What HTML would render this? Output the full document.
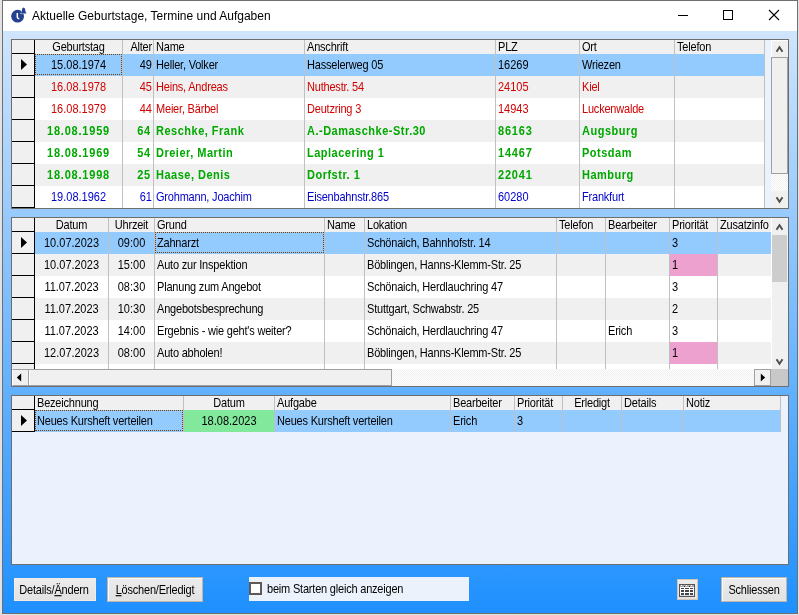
<!DOCTYPE html>
<html><head><meta charset="utf-8"><style>
html,body{margin:0;padding:0;}
body{will-change:transform;width:799px;height:615px;overflow:hidden;position:relative;background:#e2e2e2;font-family:"Liberation Sans", sans-serif;}
div{box-sizing:border-box;}
.gb{position:absolute;border:1px solid #6e6e6e;}
.rh{position:absolute;background:#f0f0f0;}
.t{position:absolute;transform:scaleY(1.12);font-size:11px;white-space:nowrap;overflow:hidden;padding:0 2px;color:#000;letter-spacing:-0.2px}
.btn{position:absolute;background:linear-gradient(#ececec,#e2e2e2);border:1px solid #c5b5a5;font-size:11px;text-align:center;color:#000;letter-spacing:-0.2px}
</style></head><body>
<div style="position:absolute;left:2px;top:0;width:796px;height:614px;border:1px solid #6f6f6f;background:#fff"></div>
<div style="position:absolute;left:3px;top:31px;width:794px;height:582px;background:linear-gradient(#cfe5fc,#1e90ff)"></div>

<div style="position:absolute;left:32px;top:8px;font-size:12px;line-height:16px;color:#000;white-space:nowrap">Aktuelle Geburtstage, Termine und Aufgaben</div>
<svg style="position:absolute;left:10px;top:6px" width="18" height="18"><circle cx="7.6" cy="10.2" r="6.4" fill="#26418f"/><path d="M7.3 7L7.3 11.2Q7.5 12.6 9.3 12.8" stroke="#fff" stroke-width="1.5" fill="none"/><path d="M10.6 7.6L16.6 7.6Q15.4 6.6 15.3 4.2Q15.1 1.6 13.6 1.6Q12.1 1.6 11.9 4.2Q11.8 6.6 10.6 7.6Z" fill="#26418f" stroke="#fff" stroke-width="0.8" paint-order="stroke"/></svg>
<div style="position:absolute;left:678px;top:15px;width:10px;height:1px;background:#000"></div>
<div style="position:absolute;left:723px;top:10px;width:10px;height:10px;border:1px solid #000"></div>
<svg style="position:absolute;left:768px;top:9px" width="12" height="12"><path d="M1 1L11 11M11 1L1 11" stroke="#000" stroke-width="1.1"/></svg>
<div class="gb" style="left:11px;top:39px;width:778px;height:170px"></div>
<div style="position:absolute;left:12px;top:40px;width:776px;height:168px;background:#ebf2fe"></div>
<div style="position:absolute;left:35px;top:40px;width:730px;height:14px;background:#f0f0f0"></div>
<div style="position:absolute;left:12px;top:40px;width:23px;height:168px;background:#000"></div>
<div class="rh" style="left:12px;top:40px;width:22px;height:13px"></div>
<div style="position:absolute;left:35px;top:54px;width:730px;height:22px;background:#94cbff"></div>
<div class="rh" style="left:12px;top:54px;width:22px;height:21px"></div>
<svg style="position:absolute;left:19px;top:57px" width="10" height="15"><path d="M2 2L2 13L8 7.5Z" fill="#000"/></svg>
<div style="position:absolute;left:35px;top:76px;width:730px;height:22px;background:#f0f0f0"></div>
<div class="rh" style="left:12px;top:76px;width:22px;height:21px"></div>
<div style="position:absolute;left:35px;top:98px;width:730px;height:22px;background:#ffffff"></div>
<div class="rh" style="left:12px;top:98px;width:22px;height:21px"></div>
<div style="position:absolute;left:35px;top:120px;width:730px;height:22px;background:#f0f0f0"></div>
<div class="rh" style="left:12px;top:120px;width:22px;height:21px"></div>
<div style="position:absolute;left:35px;top:142px;width:730px;height:22px;background:#ffffff"></div>
<div class="rh" style="left:12px;top:142px;width:22px;height:21px"></div>
<div style="position:absolute;left:35px;top:164px;width:730px;height:22px;background:#f0f0f0"></div>
<div class="rh" style="left:12px;top:164px;width:22px;height:21px"></div>
<div style="position:absolute;left:35px;top:186px;width:730px;height:22px;background:#ffffff"></div>
<div class="rh" style="left:12px;top:186px;width:22px;height:21px"></div>
<div style="position:absolute;left:122px;top:40px;width:1px;height:168px;background:#c0c0c0"></div>
<div style="position:absolute;left:153px;top:40px;width:1px;height:168px;background:#c0c0c0"></div>
<div style="position:absolute;left:304px;top:40px;width:1px;height:168px;background:#c0c0c0"></div>
<div style="position:absolute;left:495px;top:40px;width:1px;height:168px;background:#c0c0c0"></div>
<div style="position:absolute;left:579px;top:40px;width:1px;height:168px;background:#c0c0c0"></div>
<div style="position:absolute;left:674px;top:40px;width:1px;height:168px;background:#c0c0c0"></div>
<div style="position:absolute;left:764px;top:40px;width:1px;height:168px;background:#c0c0c0"></div>
<div class="t" style="left:35px;top:41px;width:87px;height:13px;line-height:13px;transform-origin:0 10.3px;text-align:center">Geburtstag</div>
<div class="t" style="left:123px;top:41px;width:30px;height:13px;line-height:13px;transform-origin:0 10.3px;text-align:right;padding-right:1px">Alter</div>
<div class="t" style="left:154px;top:41px;width:150px;height:13px;line-height:13px;transform-origin:0 10.3px;text-align:left">Name</div>
<div class="t" style="left:305px;top:41px;width:190px;height:13px;line-height:13px;transform-origin:0 10.3px;text-align:left">Anschrift</div>
<div class="t" style="left:496px;top:41px;width:83px;height:13px;line-height:13px;transform-origin:0 10.3px;text-align:left">PLZ</div>
<div class="t" style="left:580px;top:41px;width:94px;height:13px;line-height:13px;transform-origin:0 10.3px;text-align:left">Ort</div>
<div class="t" style="left:675px;top:41px;width:89px;height:13px;line-height:13px;transform-origin:0 10.3px;text-align:left">Telefon</div>
<div class="t" style="left:35px;top:54px;width:87px;height:22px;line-height:22px;transform-origin:0 14.8px;text-align:center;color:#000;font-weight:normal;letter-spacing:0px">15.08.1974</div>
<div class="t" style="left:123px;top:54px;width:30px;height:22px;line-height:22px;transform-origin:0 14.8px;text-align:right;color:#000;font-weight:normal;letter-spacing:0px;padding-right:1px">49</div>
<div class="t" style="left:154px;top:54px;width:150px;height:22px;line-height:22px;transform-origin:0 14.8px;text-align:left;color:#000;font-weight:normal;letter-spacing:-0.2px">Heller, Volker</div>
<div class="t" style="left:305px;top:54px;width:190px;height:22px;line-height:22px;transform-origin:0 14.8px;text-align:left;color:#000;font-weight:normal;letter-spacing:-0.2px">Hasselerweg 05</div>
<div class="t" style="left:496px;top:54px;width:83px;height:22px;line-height:22px;transform-origin:0 14.8px;text-align:left;color:#000;font-weight:normal;letter-spacing:0px">16269</div>
<div class="t" style="left:580px;top:54px;width:94px;height:22px;line-height:22px;transform-origin:0 14.8px;text-align:left;color:#000;font-weight:normal;letter-spacing:-0.2px">Wriezen</div>
<div class="t" style="left:35px;top:76px;width:87px;height:22px;line-height:22px;transform-origin:0 14.8px;text-align:center;color:#d20000;font-weight:normal;letter-spacing:0px">16.08.1978</div>
<div class="t" style="left:123px;top:76px;width:30px;height:22px;line-height:22px;transform-origin:0 14.8px;text-align:right;color:#d20000;font-weight:normal;letter-spacing:0px;padding-right:1px">45</div>
<div class="t" style="left:154px;top:76px;width:150px;height:22px;line-height:22px;transform-origin:0 14.8px;text-align:left;color:#d20000;font-weight:normal;letter-spacing:-0.2px">Heins, Andreas</div>
<div class="t" style="left:305px;top:76px;width:190px;height:22px;line-height:22px;transform-origin:0 14.8px;text-align:left;color:#d20000;font-weight:normal;letter-spacing:-0.2px">Nuthestr. 54</div>
<div class="t" style="left:496px;top:76px;width:83px;height:22px;line-height:22px;transform-origin:0 14.8px;text-align:left;color:#d20000;font-weight:normal;letter-spacing:0px">24105</div>
<div class="t" style="left:580px;top:76px;width:94px;height:22px;line-height:22px;transform-origin:0 14.8px;text-align:left;color:#d20000;font-weight:normal;letter-spacing:-0.2px">Kiel</div>
<div class="t" style="left:35px;top:98px;width:87px;height:22px;line-height:22px;transform-origin:0 14.8px;text-align:center;color:#d20000;font-weight:normal;letter-spacing:0px">16.08.1979</div>
<div class="t" style="left:123px;top:98px;width:30px;height:22px;line-height:22px;transform-origin:0 14.8px;text-align:right;color:#d20000;font-weight:normal;letter-spacing:0px;padding-right:1px">44</div>
<div class="t" style="left:154px;top:98px;width:150px;height:22px;line-height:22px;transform-origin:0 14.8px;text-align:left;color:#d20000;font-weight:normal;letter-spacing:-0.2px">Meier, Bärbel</div>
<div class="t" style="left:305px;top:98px;width:190px;height:22px;line-height:22px;transform-origin:0 14.8px;text-align:left;color:#d20000;font-weight:normal;letter-spacing:-0.2px">Deutzring 3</div>
<div class="t" style="left:496px;top:98px;width:83px;height:22px;line-height:22px;transform-origin:0 14.8px;text-align:left;color:#d20000;font-weight:normal;letter-spacing:0px">14943</div>
<div class="t" style="left:580px;top:98px;width:94px;height:22px;line-height:22px;transform-origin:0 14.8px;text-align:left;color:#d20000;font-weight:normal;letter-spacing:-0.2px">Luckenwalde</div>
<div class="t" style="left:35px;top:120px;width:87px;height:22px;line-height:22px;transform-origin:0 14.8px;text-align:center;color:#00a800;font-weight:bold;letter-spacing:0.8px">18.08.1959</div>
<div class="t" style="left:123px;top:120px;width:30px;height:22px;line-height:22px;transform-origin:0 14.8px;text-align:right;color:#00a800;font-weight:bold;letter-spacing:0.8px;padding-right:2px">64</div>
<div class="t" style="left:154px;top:120px;width:150px;height:22px;line-height:22px;transform-origin:0 14.8px;text-align:left;color:#00a800;font-weight:bold;letter-spacing:0.5px">Reschke, Frank</div>
<div class="t" style="left:305px;top:120px;width:190px;height:22px;line-height:22px;transform-origin:0 14.8px;text-align:left;color:#00a800;font-weight:bold;letter-spacing:0.5px">A.-Damaschke-Str.30</div>
<div class="t" style="left:496px;top:120px;width:83px;height:22px;line-height:22px;transform-origin:0 14.8px;text-align:left;color:#00a800;font-weight:bold;letter-spacing:0.8px">86163</div>
<div class="t" style="left:580px;top:120px;width:94px;height:22px;line-height:22px;transform-origin:0 14.8px;text-align:left;color:#00a800;font-weight:bold;letter-spacing:0.5px">Augsburg</div>
<div class="t" style="left:35px;top:142px;width:87px;height:22px;line-height:22px;transform-origin:0 14.8px;text-align:center;color:#00a800;font-weight:bold;letter-spacing:0.8px">18.08.1969</div>
<div class="t" style="left:123px;top:142px;width:30px;height:22px;line-height:22px;transform-origin:0 14.8px;text-align:right;color:#00a800;font-weight:bold;letter-spacing:0.8px;padding-right:2px">54</div>
<div class="t" style="left:154px;top:142px;width:150px;height:22px;line-height:22px;transform-origin:0 14.8px;text-align:left;color:#00a800;font-weight:bold;letter-spacing:0.5px">Dreier, Martin</div>
<div class="t" style="left:305px;top:142px;width:190px;height:22px;line-height:22px;transform-origin:0 14.8px;text-align:left;color:#00a800;font-weight:bold;letter-spacing:0.5px">Laplacering 1</div>
<div class="t" style="left:496px;top:142px;width:83px;height:22px;line-height:22px;transform-origin:0 14.8px;text-align:left;color:#00a800;font-weight:bold;letter-spacing:0.8px">14467</div>
<div class="t" style="left:580px;top:142px;width:94px;height:22px;line-height:22px;transform-origin:0 14.8px;text-align:left;color:#00a800;font-weight:bold;letter-spacing:0.5px">Potsdam</div>
<div class="t" style="left:35px;top:164px;width:87px;height:22px;line-height:22px;transform-origin:0 14.8px;text-align:center;color:#00a800;font-weight:bold;letter-spacing:0.8px">18.08.1998</div>
<div class="t" style="left:123px;top:164px;width:30px;height:22px;line-height:22px;transform-origin:0 14.8px;text-align:right;color:#00a800;font-weight:bold;letter-spacing:0.8px;padding-right:2px">25</div>
<div class="t" style="left:154px;top:164px;width:150px;height:22px;line-height:22px;transform-origin:0 14.8px;text-align:left;color:#00a800;font-weight:bold;letter-spacing:0.5px">Haase, Denis</div>
<div class="t" style="left:305px;top:164px;width:190px;height:22px;line-height:22px;transform-origin:0 14.8px;text-align:left;color:#00a800;font-weight:bold;letter-spacing:0.5px">Dorfstr. 1</div>
<div class="t" style="left:496px;top:164px;width:83px;height:22px;line-height:22px;transform-origin:0 14.8px;text-align:left;color:#00a800;font-weight:bold;letter-spacing:0.8px">22041</div>
<div class="t" style="left:580px;top:164px;width:94px;height:22px;line-height:22px;transform-origin:0 14.8px;text-align:left;color:#00a800;font-weight:bold;letter-spacing:0.5px">Hamburg</div>
<div class="t" style="left:35px;top:186px;width:87px;height:22px;line-height:22px;transform-origin:0 14.8px;text-align:center;color:#0000cd;font-weight:normal;letter-spacing:0px">19.08.1962</div>
<div class="t" style="left:123px;top:186px;width:30px;height:22px;line-height:22px;transform-origin:0 14.8px;text-align:right;color:#0000cd;font-weight:normal;letter-spacing:0px;padding-right:1px">61</div>
<div class="t" style="left:154px;top:186px;width:150px;height:22px;line-height:22px;transform-origin:0 14.8px;text-align:left;color:#0000cd;font-weight:normal;letter-spacing:-0.2px">Grohmann, Joachim</div>
<div class="t" style="left:305px;top:186px;width:190px;height:22px;line-height:22px;transform-origin:0 14.8px;text-align:left;color:#0000cd;font-weight:normal;letter-spacing:-0.2px">Eisenbahnstr.865</div>
<div class="t" style="left:496px;top:186px;width:83px;height:22px;line-height:22px;transform-origin:0 14.8px;text-align:left;color:#0000cd;font-weight:normal;letter-spacing:0px">60280</div>
<div class="t" style="left:580px;top:186px;width:94px;height:22px;line-height:22px;transform-origin:0 14.8px;text-align:left;color:#0000cd;font-weight:normal;letter-spacing:-0.2px">Frankfurt</div>
<div class="gb" style="left:11px;top:217px;width:778px;height:170px"></div>
<div style="position:absolute;left:12px;top:218px;width:776px;height:168px;background:#ebf2fe"></div>
<div style="position:absolute;left:35px;top:218px;width:736px;height:14px;background:#f0f0f0"></div>
<div style="position:absolute;left:12px;top:218px;width:23px;height:151px;background:#000"></div>
<div class="rh" style="left:12px;top:218px;width:22px;height:13px"></div>
<div style="position:absolute;left:35px;top:232px;width:736px;height:22px;background:#94cbff"></div>
<div class="rh" style="left:12px;top:232px;width:22px;height:21px"></div>
<svg style="position:absolute;left:19px;top:235px" width="10" height="15"><path d="M2 2L2 13L8 7.5Z" fill="#000"/></svg>
<div style="position:absolute;left:35px;top:254px;width:736px;height:22px;background:#f0f0f0"></div>
<div style="position:absolute;left:670px;top:254px;width:47px;height:22px;background:#eca1cf"></div>
<div class="rh" style="left:12px;top:254px;width:22px;height:21px"></div>
<div style="position:absolute;left:35px;top:276px;width:736px;height:22px;background:#ffffff"></div>
<div class="rh" style="left:12px;top:276px;width:22px;height:21px"></div>
<div style="position:absolute;left:35px;top:298px;width:736px;height:22px;background:#f0f0f0"></div>
<div class="rh" style="left:12px;top:298px;width:22px;height:21px"></div>
<div style="position:absolute;left:35px;top:320px;width:736px;height:22px;background:#ffffff"></div>
<div class="rh" style="left:12px;top:320px;width:22px;height:21px"></div>
<div style="position:absolute;left:35px;top:342px;width:736px;height:22px;background:#f0f0f0"></div>
<div style="position:absolute;left:670px;top:342px;width:47px;height:22px;background:#eca1cf"></div>
<div class="rh" style="left:12px;top:342px;width:22px;height:21px"></div>
<div style="position:absolute;left:35px;top:364px;width:736px;height:5px;background:#ffffff"></div>
<div class="rh" style="left:12px;top:364px;width:22px;height:5px"></div>
<div style="position:absolute;left:108px;top:218px;width:1px;height:151px;background:#c0c0c0"></div>
<div style="position:absolute;left:154px;top:218px;width:1px;height:151px;background:#c0c0c0"></div>
<div style="position:absolute;left:324px;top:218px;width:1px;height:151px;background:#c0c0c0"></div>
<div style="position:absolute;left:364px;top:218px;width:1px;height:151px;background:#c0c0c0"></div>
<div style="position:absolute;left:556px;top:218px;width:1px;height:151px;background:#c0c0c0"></div>
<div style="position:absolute;left:605px;top:218px;width:1px;height:151px;background:#c0c0c0"></div>
<div style="position:absolute;left:669px;top:218px;width:1px;height:151px;background:#c0c0c0"></div>
<div style="position:absolute;left:717px;top:218px;width:1px;height:151px;background:#c0c0c0"></div>
<div class="t" style="left:35px;top:219px;width:73px;height:13px;line-height:13px;transform-origin:0 10.3px;text-align:center">Datum</div>
<div class="t" style="left:109px;top:219px;width:45px;height:13px;line-height:13px;transform-origin:0 10.3px;text-align:center">Uhrzeit</div>
<div class="t" style="left:155px;top:219px;width:169px;height:13px;line-height:13px;transform-origin:0 10.3px;text-align:left">Grund</div>
<div class="t" style="left:325px;top:219px;width:39px;height:13px;line-height:13px;transform-origin:0 10.3px;text-align:left">Name</div>
<div class="t" style="left:365px;top:219px;width:191px;height:13px;line-height:13px;transform-origin:0 10.3px;text-align:left">Lokation</div>
<div class="t" style="left:557px;top:219px;width:48px;height:13px;line-height:13px;transform-origin:0 10.3px;text-align:left">Telefon</div>
<div class="t" style="left:606px;top:219px;width:63px;height:13px;line-height:13px;transform-origin:0 10.3px;text-align:left">Bearbeiter</div>
<div class="t" style="left:670px;top:219px;width:47px;height:13px;line-height:13px;transform-origin:0 10.3px;text-align:left">Priorität</div>
<div class="t" style="left:718px;top:219px;width:60px;height:13px;line-height:13px;transform-origin:0 10.3px;text-align:left">Zusatzinfo</div>
<div class="t" style="left:35px;top:232px;width:73px;height:22px;line-height:22px;transform-origin:0 14.8px;text-align:center;color:#000;font-weight:normal;letter-spacing:0px">10.07.2023</div>
<div class="t" style="left:109px;top:232px;width:45px;height:22px;line-height:22px;transform-origin:0 14.8px;text-align:center;color:#000;font-weight:normal;letter-spacing:0px">09:00</div>
<div class="t" style="left:155px;top:232px;width:169px;height:22px;line-height:22px;transform-origin:0 14.8px;text-align:left;color:#000;font-weight:normal;letter-spacing:-0.2px">Zahnarzt</div>
<div class="t" style="left:365px;top:232px;width:191px;height:22px;line-height:22px;transform-origin:0 14.8px;text-align:left;color:#000;font-weight:normal;letter-spacing:-0.2px">Schönaich, Bahnhofstr. 14</div>
<div class="t" style="left:670px;top:232px;width:47px;height:22px;line-height:22px;transform-origin:0 14.8px;text-align:left;color:#000;font-weight:normal;letter-spacing:0px">3</div>
<div class="t" style="left:35px;top:254px;width:73px;height:22px;line-height:22px;transform-origin:0 14.8px;text-align:center;color:#000;font-weight:normal;letter-spacing:0px">10.07.2023</div>
<div class="t" style="left:109px;top:254px;width:45px;height:22px;line-height:22px;transform-origin:0 14.8px;text-align:center;color:#000;font-weight:normal;letter-spacing:0px">15:00</div>
<div class="t" style="left:155px;top:254px;width:169px;height:22px;line-height:22px;transform-origin:0 14.8px;text-align:left;color:#000;font-weight:normal;letter-spacing:-0.2px">Auto zur Inspektion</div>
<div class="t" style="left:365px;top:254px;width:191px;height:22px;line-height:22px;transform-origin:0 14.8px;text-align:left;color:#000;font-weight:normal;letter-spacing:-0.2px">Böblingen, Hanns-Klemm-Str. 25</div>
<div class="t" style="left:670px;top:254px;width:47px;height:22px;line-height:22px;transform-origin:0 14.8px;text-align:left;color:#000;font-weight:normal;letter-spacing:0px">1</div>
<div class="t" style="left:35px;top:276px;width:73px;height:22px;line-height:22px;transform-origin:0 14.8px;text-align:center;color:#000;font-weight:normal;letter-spacing:0px">11.07.2023</div>
<div class="t" style="left:109px;top:276px;width:45px;height:22px;line-height:22px;transform-origin:0 14.8px;text-align:center;color:#000;font-weight:normal;letter-spacing:0px">08:30</div>
<div class="t" style="left:155px;top:276px;width:169px;height:22px;line-height:22px;transform-origin:0 14.8px;text-align:left;color:#000;font-weight:normal;letter-spacing:-0.2px">Planung zum Angebot</div>
<div class="t" style="left:365px;top:276px;width:191px;height:22px;line-height:22px;transform-origin:0 14.8px;text-align:left;color:#000;font-weight:normal;letter-spacing:-0.2px">Schönaich, Herdlauchring 47</div>
<div class="t" style="left:670px;top:276px;width:47px;height:22px;line-height:22px;transform-origin:0 14.8px;text-align:left;color:#000;font-weight:normal;letter-spacing:0px">3</div>
<div class="t" style="left:35px;top:298px;width:73px;height:22px;line-height:22px;transform-origin:0 14.8px;text-align:center;color:#000;font-weight:normal;letter-spacing:0px">11.07.2023</div>
<div class="t" style="left:109px;top:298px;width:45px;height:22px;line-height:22px;transform-origin:0 14.8px;text-align:center;color:#000;font-weight:normal;letter-spacing:0px">10:30</div>
<div class="t" style="left:155px;top:298px;width:169px;height:22px;line-height:22px;transform-origin:0 14.8px;text-align:left;color:#000;font-weight:normal;letter-spacing:-0.2px">Angebotsbesprechung</div>
<div class="t" style="left:365px;top:298px;width:191px;height:22px;line-height:22px;transform-origin:0 14.8px;text-align:left;color:#000;font-weight:normal;letter-spacing:-0.2px">Stuttgart, Schwabstr. 25</div>
<div class="t" style="left:670px;top:298px;width:47px;height:22px;line-height:22px;transform-origin:0 14.8px;text-align:left;color:#000;font-weight:normal;letter-spacing:0px">2</div>
<div class="t" style="left:35px;top:320px;width:73px;height:22px;line-height:22px;transform-origin:0 14.8px;text-align:center;color:#000;font-weight:normal;letter-spacing:0px">11.07.2023</div>
<div class="t" style="left:109px;top:320px;width:45px;height:22px;line-height:22px;transform-origin:0 14.8px;text-align:center;color:#000;font-weight:normal;letter-spacing:0px">14:00</div>
<div class="t" style="left:155px;top:320px;width:169px;height:22px;line-height:22px;transform-origin:0 14.8px;text-align:left;color:#000;font-weight:normal;letter-spacing:-0.2px">Ergebnis - wie geht's weiter?</div>
<div class="t" style="left:365px;top:320px;width:191px;height:22px;line-height:22px;transform-origin:0 14.8px;text-align:left;color:#000;font-weight:normal;letter-spacing:-0.2px">Schönaich, Herdlauchring 47</div>
<div class="t" style="left:606px;top:320px;width:63px;height:22px;line-height:22px;transform-origin:0 14.8px;text-align:left;color:#000;font-weight:normal;letter-spacing:-0.2px">Erich</div>
<div class="t" style="left:670px;top:320px;width:47px;height:22px;line-height:22px;transform-origin:0 14.8px;text-align:left;color:#000;font-weight:normal;letter-spacing:0px">3</div>
<div class="t" style="left:35px;top:342px;width:73px;height:22px;line-height:22px;transform-origin:0 14.8px;text-align:center;color:#000;font-weight:normal;letter-spacing:0px">12.07.2023</div>
<div class="t" style="left:109px;top:342px;width:45px;height:22px;line-height:22px;transform-origin:0 14.8px;text-align:center;color:#000;font-weight:normal;letter-spacing:0px">08:00</div>
<div class="t" style="left:155px;top:342px;width:169px;height:22px;line-height:22px;transform-origin:0 14.8px;text-align:left;color:#000;font-weight:normal;letter-spacing:-0.2px">Auto abholen!</div>
<div class="t" style="left:365px;top:342px;width:191px;height:22px;line-height:22px;transform-origin:0 14.8px;text-align:left;color:#000;font-weight:normal;letter-spacing:-0.2px">Böblingen, Hanns-Klemm-Str. 25</div>
<div class="t" style="left:670px;top:342px;width:47px;height:22px;line-height:22px;transform-origin:0 14.8px;text-align:left;color:#000;font-weight:normal;letter-spacing:0px">1</div>
<div class="gb" style="left:11px;top:395px;width:778px;height:170px"></div>
<div style="position:absolute;left:12px;top:396px;width:776px;height:168px;background:#ebf2fe"></div>
<div style="position:absolute;left:35px;top:396px;width:746px;height:14px;background:#f0f0f0"></div>
<div style="position:absolute;left:12px;top:396px;width:23px;height:36px;background:#000"></div>
<div class="rh" style="left:12px;top:396px;width:22px;height:13px"></div>
<div style="position:absolute;left:35px;top:410px;width:746px;height:22px;background:#94cbff"></div>
<div style="position:absolute;left:184px;top:410px;width:90px;height:22px;background:#82e89c"></div>
<div class="rh" style="left:12px;top:410px;width:22px;height:21px"></div>
<svg style="position:absolute;left:19px;top:413px" width="10" height="15"><path d="M2 2L2 13L8 7.5Z" fill="#000"/></svg>
<div style="position:absolute;left:183px;top:396px;width:1px;height:36px;background:#c0c0c0"></div>
<div style="position:absolute;left:274px;top:396px;width:1px;height:36px;background:#c0c0c0"></div>
<div style="position:absolute;left:450px;top:396px;width:1px;height:36px;background:#c0c0c0"></div>
<div style="position:absolute;left:514px;top:396px;width:1px;height:36px;background:#c0c0c0"></div>
<div style="position:absolute;left:562px;top:396px;width:1px;height:36px;background:#c0c0c0"></div>
<div style="position:absolute;left:621px;top:396px;width:1px;height:36px;background:#c0c0c0"></div>
<div style="position:absolute;left:683px;top:396px;width:1px;height:36px;background:#c0c0c0"></div>
<div style="position:absolute;left:780px;top:396px;width:1px;height:36px;background:#c0c0c0"></div>
<div class="t" style="left:35px;top:397px;width:148px;height:13px;line-height:13px;transform-origin:0 10.3px;text-align:left">Bezeichnung</div>
<div class="t" style="left:184px;top:397px;width:90px;height:13px;line-height:13px;transform-origin:0 10.3px;text-align:center">Datum</div>
<div class="t" style="left:275px;top:397px;width:175px;height:13px;line-height:13px;transform-origin:0 10.3px;text-align:left">Aufgabe</div>
<div class="t" style="left:451px;top:397px;width:63px;height:13px;line-height:13px;transform-origin:0 10.3px;text-align:left">Bearbeiter</div>
<div class="t" style="left:515px;top:397px;width:47px;height:13px;line-height:13px;transform-origin:0 10.3px;text-align:left">Priorität</div>
<div class="t" style="left:563px;top:397px;width:58px;height:13px;line-height:13px;transform-origin:0 10.3px;text-align:center">Erledigt</div>
<div class="t" style="left:622px;top:397px;width:61px;height:13px;line-height:13px;transform-origin:0 10.3px;text-align:left">Details</div>
<div class="t" style="left:684px;top:397px;width:96px;height:13px;line-height:13px;transform-origin:0 10.3px;text-align:left">Notiz</div>
<div class="t" style="left:35px;top:410px;width:148px;height:22px;line-height:22px;transform-origin:0 14.8px;text-align:left;color:#000;font-weight:normal;letter-spacing:-0.2px">Neues Kursheft verteilen</div>
<div class="t" style="left:184px;top:410px;width:90px;height:22px;line-height:22px;transform-origin:0 14.8px;text-align:center;color:#000;font-weight:normal;letter-spacing:0px">18.08.2023</div>
<div class="t" style="left:275px;top:410px;width:175px;height:22px;line-height:22px;transform-origin:0 14.8px;text-align:left;color:#000;font-weight:normal;letter-spacing:-0.2px">Neues Kursheft verteilen</div>
<div class="t" style="left:451px;top:410px;width:63px;height:22px;line-height:22px;transform-origin:0 14.8px;text-align:left;color:#000;font-weight:normal;letter-spacing:-0.2px">Erich</div>
<div class="t" style="left:515px;top:410px;width:47px;height:22px;line-height:22px;transform-origin:0 14.8px;text-align:left;color:#000;font-weight:normal;letter-spacing:0px">3</div>
<div style="position:absolute;left:771px;top:40px;width:17px;height:168px;background-color:#fff;background-image:linear-gradient(45deg,#f0f0f0 25%,transparent 25%,transparent 75%,#f0f0f0 75%),linear-gradient(45deg,#f0f0f0 25%,transparent 25%,transparent 75%,#f0f0f0 75%);background-size:2px 2px;background-position:0 0,1px 1px;"></div>
<div style="position:absolute;left:771px;top:40px;width:17px;height:17px;background:#f0f0f0;border-left:1px solid #fff;border-top:1px solid #fff"></div>
<svg style="position:absolute;left:775px;top:45px" width="10" height="9"><path d="M1.5 6.8L4.5 2.2L7.5 6.8" stroke="#4d4d4d" stroke-width="1.9" fill="none" stroke-linecap="butt" stroke-linejoin="miter"/></svg>
<div style="position:absolute;left:771px;top:57px;width:17px;height:117px;background:#f0f0f0;border:1px solid #a0a0a0"></div>
<div style="position:absolute;left:771px;top:191px;width:17px;height:17px;background:#f0f0f0"></div>
<svg style="position:absolute;left:775px;top:196px" width="10" height="9"><path d="M1.5 1.2L4.5 5.8L7.5 1.2" stroke="#4d4d4d" stroke-width="1.9" fill="none" stroke-linecap="butt" stroke-linejoin="miter"/></svg>
<div style="position:absolute;left:771px;top:218px;width:17px;height:151px;background:#f0f0f0;border-left:1px solid #fff"></div>
<svg style="position:absolute;left:775px;top:223px" width="10" height="9"><path d="M1.5 6.8L4.5 2.2L7.5 6.8" stroke="#4d4d4d" stroke-width="1.9" fill="none" stroke-linecap="butt" stroke-linejoin="miter"/></svg>
<div style="position:absolute;left:772px;top:235px;width:15px;height:47px;background:#cdcdcd"></div>
<svg style="position:absolute;left:775px;top:358px" width="10" height="9"><path d="M1.5 1.2L4.5 5.8L7.5 1.2" stroke="#4d4d4d" stroke-width="1.9" fill="none" stroke-linecap="butt" stroke-linejoin="miter"/></svg>
<div style="position:absolute;left:771px;top:369px;width:17px;height:17px;background:#c8c8c8"></div>
<div style="position:absolute;left:12px;top:369px;width:759px;height:17px;background-color:#fff;background-image:linear-gradient(45deg,#f0f0f0 25%,transparent 25%,transparent 75%,#f0f0f0 75%),linear-gradient(45deg,#f0f0f0 25%,transparent 25%,transparent 75%,#f0f0f0 75%);background-size:2px 2px;background-position:0 0,1px 1px;"></div>
<div style="position:absolute;left:12px;top:369px;width:17px;height:17px;background:#f0f0f0;border-top:1px solid #a0a0a0;border-bottom:1px solid #a0a0a0;border-left:1px solid #fff"></div>
<svg style="position:absolute;left:16px;top:373px" width="7" height="10"><path d="M0.8 4.5L5.2 0.6L5.2 8.4Z" fill="#000"/></svg>
<div style="position:absolute;left:28px;top:369px;width:364px;height:17px;background:#f0f0f0;border:1px solid #a0a0a0;box-shadow:inset 1px 0 0 #fff"></div>
<div style="position:absolute;left:754px;top:369px;width:17px;height:17px;background:#f0f0f0;border:1px solid #a0a0a0"></div>
<svg style="position:absolute;left:760px;top:373px" width="7" height="10"><path d="M0.8 0.6L5.2 4.5L0.8 8.4Z" fill="#000"/></svg>
<div style="position:absolute;left:35px;top:54px;width:87px;height:21px;border:1px dotted #7a3c00"></div>
<div style="position:absolute;left:155px;top:232px;width:169px;height:21px;border:1px dotted #7a3c00"></div>
<div style="position:absolute;left:35px;top:410px;width:148px;height:21px;border:1px dotted #7a3c00"></div>
<div class="btn" style="left:14px;top:578px;width:82px;height:23px;border-color:#f4ece4"></div>
<div class="t" style="left:13px;top:579px;width:82px;height:22px;line-height:22px;transform-origin:0 14.8px;text-align:center;padding:0">Details/<u>Ä</u>ndern</div>
<div class="btn" style="left:107px;top:577px;width:96px;height:25px;box-shadow:inset 1px 1px 0 #fafafa"></div>
<div class="t" style="left:107px;top:579px;width:96px;height:22px;line-height:22px;transform-origin:0 14.8px;text-align:center;padding:0"><u>L</u>öschen/Erledigt</div>
<div style="position:absolute;left:249px;top:577px;width:220px;height:24px;background:#ecf2fc"></div>
<div style="position:absolute;left:249px;top:582px;width:13px;height:13px;border:2px solid #5f5a55;background:#fff"></div>
<div class="t" style="left:265px;top:578px;height:22px;line-height:22px;transform-origin:0 14.8px">beim Starten gleich anzeigen</div>
<div class="btn" style="left:677px;top:579px;width:21px;height:21px;border-color:#d2c4b6"></div>
<svg style="position:absolute;left:679px;top:584px" width="16" height="13" shape-rendering="crispEdges"><rect x="0" y="0" width="16" height="13" fill="#555"/><rect x="1" y="1" width="14" height="11" fill="#fff"/><rect x="1" y="1" width="14" height="2" fill="#a9a9a9"/><rect x="2" y="1" width="1" height="1" fill="#fff"/><rect x="7" y="1" width="1" height="1" fill="#fff"/><rect x="12" y="1" width="1" height="1" fill="#fff"/><rect x="5" y="2" width="1" height="1" fill="#333"/><rect x="10" y="2" width="1" height="1" fill="#333"/><rect x="2" y="4" width="3" height="1" fill="#444"/><rect x="6" y="4" width="4" height="1" fill="#444"/><rect x="11" y="4" width="3" height="1" fill="#444"/><rect x="2" y="6" width="3" height="2" fill="#444"/><rect x="6" y="6" width="4" height="2" fill="#444"/><rect x="11" y="6" width="3" height="2" fill="#444"/><rect x="2" y="9" width="3" height="2" fill="#444"/><rect x="6" y="9" width="4" height="2" fill="#444"/><rect x="11" y="9" width="3" height="2" fill="#444"/><rect x="1" y="11" width="14" height="1" fill="#ddd"/></svg>
<div class="btn" style="left:721px;top:577px;width:66px;height:25px;box-shadow:inset 1px 1px 0 #fafafa"></div>
<div class="t" style="left:721px;top:579px;width:66px;height:22px;line-height:22px;transform-origin:0 14.8px;text-align:center;padding:0">Schliessen</div>
</body></html>
